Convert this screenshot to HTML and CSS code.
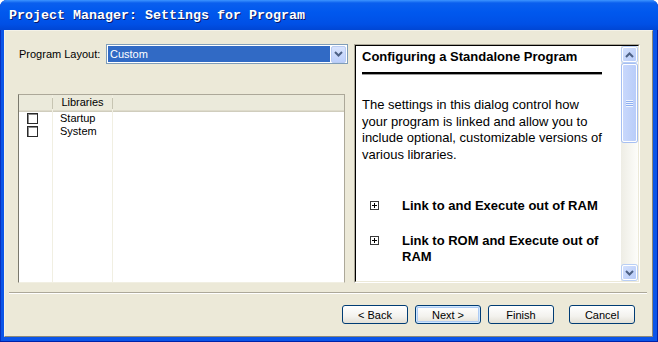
FILE: index.html
```html
<!DOCTYPE html>
<html>

<head>
    <title>Project Manager: Settings for Program</title>
    <link rel="stylesheet" href="styles.css">
</head>

<body>
    <div class="window">
        <div class="titlebar">Project Manager: Settings for Program</div>

        <div class="client">
            <div class="main">
                <div class="left-side">
                    <div class="layout-row">
                        <span class="layout-label">Program Layout:</span>
                        <div class="combo">
                            <span class="combo-value">Custom</span>
                            <span class="combo-btn">
                                <svg width="9" height="6" viewBox="0 0 9 6">
                                    <polyline points="1,1 4.5,4.5 8,1" fill="none" stroke="#4d6185" stroke-width="2" />
                                </svg>
                            </span>
                        </div>
                    </div>

                    <div class="list">
                        <div class="col col-check">
                            <div class="col-head"></div>
                            <div class="row"><span class="checkbox"></span></div>
                            <div class="row"><span class="checkbox"></span></div>
                        </div>
                        <div class="col col-name">
                            <div class="col-head">Libraries</div>
                            <div class="row">Startup</div>
                            <div class="row">System</div>
                        </div>
                        <div class="col col-rest">
                            <div class="col-head"></div>
                        </div>
                    </div>
                </div>

                <div class="help">
                    <div class="help-inner">
                        <div class="help-text">
                            <h2 class="help-title">Configuring a Standalone Program</h2>
                            <div class="help-rule"></div>
                            <p class="help-para">
                                The settings in this dialog control how<br>
                                your program is linked and allow you to<br>
                                include optional, customizable versions of<br>
                                various libraries.
                            </p>
                            <div class="expander first">
                                <span class="plus-box"></span>
                                <span class="expander-text">Link to and Execute out of RAM</span>
                            </div>
                            <div class="expander">
                                <span class="plus-box"></span>
                                <span class="expander-text">Link to ROM and Execute out of<br>RAM</span>
                            </div>
                        </div>

                        <div class="scrollbar">
                            <div class="scroll-btn">
                                <svg width="9" height="6" viewBox="0 0 9 6">
                                    <polyline points="1,5 4.5,1.5 8,5" fill="none" stroke="#4d6185" stroke-width="2" />
                                </svg>
                            </div>
                            <div class="scroll-thumb">
                                <span class="grip"></span>
                            </div>
                            <div class="scroll-track"></div>
                            <div class="scroll-btn">
                                <svg width="9" height="6" viewBox="0 0 9 6">
                                    <polyline points="1,1 4.5,4.5 8,1" fill="none" stroke="#4d6185" stroke-width="2" />
                                </svg>
                            </div>
                        </div>
                    </div>
                </div>
            </div>

            <div class="separator"></div>

            <div class="buttons">
                <button class="btn">&lt; Back</button>
                <button class="btn default">Next &gt;</button>
                <button class="btn">Finish</button>
                <button class="btn cancel">Cancel</button>
            </div>
        </div>
    </div>
</body>

</html>
```

FILE: styles.css
```css
body {
    margin: 0;
    background: #fff;
    font-family: "Liberation Sans", Arial, sans-serif;
}

.window {
    width: 658px;
    height: 342px;
    display: flex;
    flex-direction: column;
    background: #0a55e8;
    border-radius: 7px 7px 0 0;
    box-shadow: inset -1px -1px 0 #0021a8, inset 1px 0 0 #0831c0;
    overflow: hidden;
}

.titlebar {
    height: 30px;
    flex-shrink: 0;
    padding-left: 9px;
    box-sizing: border-box;
    background: linear-gradient(#3d95ff 0, #0a5fee 3px, #0058ee 40%, #0050e6 80%, #0046d4 100%);
    color: #fff;
    font-family: "Liberation Mono", "Courier New", monospace;
    font-weight: bold;
    font-size: 13.33px;
    line-height: 32px;
    text-shadow: 1px 1px 0 #0a1a6a;
    white-space: nowrap;
}

.client {
    flex: 1;
    margin: 0 5px 5px 4px;
    background: #ece9d8;
    border-top: 1px solid #f4f2e8;
    border-left: 1px solid #f4f2e8;
    border-right: 1px solid #8a887a;
    border-bottom: 1px solid #8a887a;
    padding: 13px 12px 0 13px;
    box-sizing: border-box;
    font-size: 11px;
    color: #000;
}

.main {
    display: flex;
    height: 239px;
}

.left-side {
    width: 330px;
    display: flex;
    flex-direction: column;
}

.layout-row {
    display: flex;
    align-items: center;
    height: 20px;
}

.layout-label {
    width: 87px;
    padding-left: 1px;
}

.combo {
    width: 242px;
    height: 20px;
    box-sizing: border-box;
    border: 1px solid #7f9db9;
    background: #fff;
    display: flex;
    align-items: center;
    padding: 1px;
}

.combo-value {
    flex: 1;
    height: 16px;
    line-height: 16px;
    background: #316ac5;
    color: #fff;
    padding-left: 2px;
    margin-right: 1px;
}

.combo-btn {
    width: 15px;
    height: 17px;
    box-sizing: border-box;
    background: linear-gradient(#d9e4fd, #bccffb);
    border: 1px solid #b9ccf3;
    border-radius: 2px;
    display: flex;
    align-items: center;
    justify-content: center;
}

.list {
    margin-top: 30px;
    width: 327px;
    height: 189px;
    box-sizing: border-box;
    display: flex;
    background: #fff;
    border: 1px solid #aca899;
    border-left-color: #7a786c;
    border-bottom-color: #f1efe2;
}

.col {
    box-sizing: border-box;
    border-right: 1px solid #f1efe2;
}

.col-check {
    width: 34px;
}

.col-name {
    width: 60px;
}

.col-rest {
    flex: 1;
    border-right: none;
}

.col-head {
    position: relative;
    height: 17px;
    line-height: 15px;
    text-align: center;
    background: #ebeadb;
    box-shadow: inset 0 -1px 0 #d0cdbd, inset 0 -2px 0 #dedbcb;
}

.col-head::after {
    content: "";
    position: absolute;
    right: -1px;
    top: 3px;
    width: 1px;
    height: 11px;
    background: #c7c5b2;
}

.col-rest .col-head::after {
    display: none;
}

.row {
    height: 13px;
    line-height: 13px;
    padding-left: 7px;
}

.col-check .row {
    padding-left: 8px;
    display: flex;
    align-items: center;
}

.checkbox {
    width: 11px;
    height: 11px;
    box-sizing: border-box;
    border: 1px solid #2a2a2a;
    box-shadow: inset 1px 1px 0 #8c8c8c;
    background: #fff;
}

.help {
    margin-left: 6px;
    width: 286px;
    box-sizing: border-box;
    border: 1px solid;
    border-color: #aca899 #fff #fff #aca899;
}

.help-inner {
    height: 100%;
    box-sizing: border-box;
    border: 1px solid;
    border-color: #000 #ece9d8 #ece9d8 #000;
    background: #fff;
    display: flex;
}

.help-text {
    flex: 1;
    padding: 3px 0 0 6px;
    font-family: "Liberation Sans", Arial, sans-serif;
    font-size: 13px;
    overflow: hidden;
}

.help-title {
    margin: 0;
    font-size: 13px;
    line-height: 16px;
    font-weight: bold;
}

.help-rule {
    width: 240px;
    height: 2px;
    margin-top: 7px;
    background: #000;
    box-shadow: 0 1px 0 #9a9a9a;
}

.help-para {
    margin: 23px 0 0 0;
    line-height: 16.5px;
}

.expander {
    display: flex;
    margin-top: 19px;
    padding-left: 8px;
    font-weight: bold;
    line-height: 16px;
}

.expander.first {
    margin-top: 35px;
}

.plus-box {
    position: relative;
    width: 9px;
    height: 9px;
    margin-top: 3px;
    margin-right: 23px;
    flex-shrink: 0;
    box-sizing: border-box;
    border: 1px solid #3a3a3a;
}

.plus-box::before,
.plus-box::after {
    content: "";
    position: absolute;
    background: #000;
}

.plus-box::before {
    left: 1px;
    top: 3px;
    width: 5px;
    height: 1px;
}

.plus-box::after {
    left: 3px;
    top: 1px;
    width: 1px;
    height: 5px;
}

.scrollbar {
    width: 17px;
    display: flex;
    flex-direction: column;
    background: linear-gradient(to right, #eeede5, #fdfdfa);
}

.scroll-btn {
    width: 15px;
    height: 15px;
    margin: 1px;
    box-sizing: border-box;
    border: 1px solid #fff;
    border-radius: 2px;
    background: linear-gradient(135deg, #d3e0fd, #b7cbf8);
    box-shadow: 0 0 0 1px #b8cef5;
    display: flex;
    align-items: center;
    justify-content: center;
}

.scroll-thumb {
    height: 78px;
    margin: 1px;
    box-sizing: border-box;
    border: 1px solid #fff;
    border-radius: 2px;
    background: linear-gradient(to right, #c9d8fc, #b9cdf9);
    box-shadow: 0 0 0 1px #a6bff2;
    display: flex;
    align-items: center;
    justify-content: center;
}

.grip {
    width: 7px;
    height: 7px;
    background: repeating-linear-gradient(#eef4fe 0, #eef4fe 1px, #8faff0 1px, #8faff0 2px);
}

.scroll-track {
    flex: 1;
}

.separator {
    margin: 9px -7px 0 -9px;
    height: 1px;
    background: #aca899;
    border-bottom: 1px solid #fff;
}

.buttons {
    display: flex;
    justify-content: flex-end;
    gap: 7px;
    margin-top: 11px;
    padding-right: 5px;
}

.btn {
    width: 66px;
    height: 19px;
    padding: 0;
    border: 1px solid #003c74;
    border-radius: 3px;
    background: linear-gradient(#ffffff, #f3f2ee 60%, #e3e0d6);
    font-family: "Liberation Sans", Arial, sans-serif;
    font-size: 11px;
    color: #000;
}

.btn.default {
    box-shadow: inset 0 0 0 1px #cee7ff, inset 0 0 0 2px #aecbf3;
}

.btn.cancel {
    margin-left: 8px;
}
```
